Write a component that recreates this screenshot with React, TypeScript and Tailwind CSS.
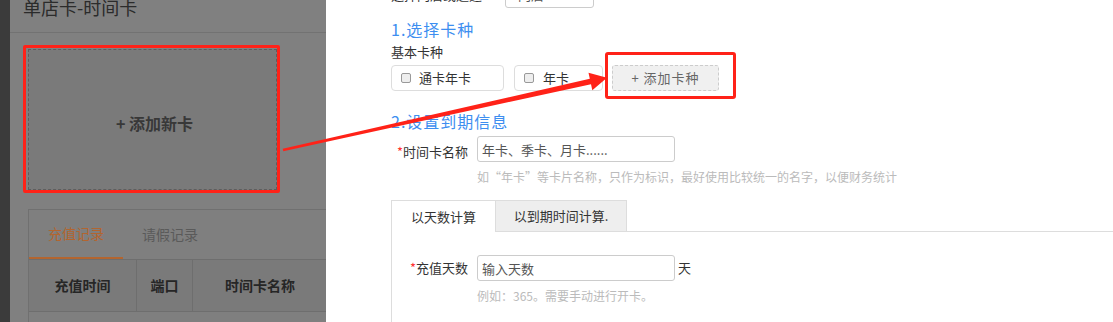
import React from "react";

export default function App() {
  return (
    <div className="relative w-[1113px] h-[322px] overflow-hidden flex bg-white font-['Noto_Sans_CJK_SC','Microsoft_YaHei','Liberation_Sans',sans-serif]">
      {/* left dimmed page */}
      <div className="w-[10px] shrink-0 bg-[#3b3b3b]" />
      <div className="w-[316px] shrink-0 bg-[#808080] overflow-hidden">
        <div className="flex h-[33px] border-b border-[#727272] pl-[13px]">
          <div className="-mt-[5px] text-[18px] leading-[24px] text-[#2b2b2b]">单店卡-时间卡</div>
        </div>
        <div className="ml-[18px] mt-[16px] w-[249px] h-[141px] border border-dashed border-[#5e5e5e] bg-[#7a7a7a] flex items-center justify-center pt-[7px] pl-[4px] text-[16px] leading-[22px] font-bold text-[#383838]">
          + 添加新卡
        </div>
        <div className="ml-[18px] mt-[19px] w-[330px] border border-[#707070] bg-[#7f7f7f]">
          <div className="flex h-[50px] border-b border-[#6e6e6e]">
            <div className="w-[94px] flex items-center justify-center text-[14px] text-[#b3652f] border-b-2 border-[#b3652f]">充值记录</div>
            <div className="w-[94px] flex items-center justify-center text-[14px] text-[#5a5a5a]">请假记录</div>
          </div>
          <div className="flex h-[52px] bg-[#7a7a7a] border-b border-[#6e6e6e] text-[14px] font-bold text-[#262626]">
            <div className="w-[108px] border-r border-[#6e6e6e] flex items-center justify-center">充值时间</div>
            <div className="w-[56px] border-r border-[#6e6e6e] flex items-center justify-center">端口</div>
            <div className="w-[134px] flex items-center justify-center">时间卡名称</div>
          </div>
          <div className="h-[40px]" />
        </div>
      </div>

      {/* modal */}
      <div className="flex-1 bg-white pl-[65px] text-[13px] text-[#333]">
        <div className="flex items-center h-[26px] -mt-[18px]">
          <div className="w-[114px] leading-[18px]">选择门店或通道</div>
          <div className="w-[89px] h-[26px] border border-[#ccc] rounded-[3px] pl-[12px] flex items-center text-[#555]">门店</div>
        </div>
        <div className="mt-[10px] text-[16px] leading-[22px] text-[#3d8ef0] tracking-[1px]">1.选择卡种</div>
        <div className="mt-[3px] leading-[18px]">基本卡种</div>
        <div className="mt-[4px] flex">
          <div className="w-[113px] h-[26px] border border-[#ddd] rounded-[4px] flex items-center pl-[9px]">
            <span className="w-[10px] h-[10px] border border-[#999] rounded-[2px] bg-[#eee] mr-[8px]" />
            <span className="leading-[18px]">通卡年卡</span>
          </div>
          <div className="ml-[10px] w-[89px] h-[26px] border border-[#ddd] rounded-[4px] flex items-center pl-[9px]">
            <span className="w-[10px] h-[10px] border border-[#999] rounded-[2px] bg-[#eee] mr-[9px]" />
            <span className="leading-[18px]">年卡</span>
          </div>
          <div className="ml-[9px] w-[107px] h-[26px] border border-dashed border-[#ccc] rounded-[3px] bg-[#f0f0f0] flex items-center justify-center text-[#666] tracking-[1px]">
            + 添加卡种
          </div>
        </div>
        <div className="mt-[19px] text-[16px] leading-[22px] text-[#3d8ef0] tracking-[1px]">2.设置到期信息</div>
        <div className="mt-[4px] flex items-center">
          <div className="w-[77px] text-right mr-[9px] pt-[5px] leading-[18px]">
            <span className="text-[#f33]">*</span>时间卡名称
          </div>
          <input
            readOnly
            placeholder="年卡、季卡、月卡......"
            className="w-[198px] h-[26px] border border-[#ccc] rounded-[3px] px-[4px] text-[13px] outline-none placeholder:text-[#555]"
          />
        </div>
        <div className="mt-[7px] ml-[86px] text-[12px] leading-[16px] text-[#bbb] whitespace-nowrap">
          如“年卡”等卡片名称，只作为标识，最好使用比较统一的名字，以便财务统计
        </div>
        <div className="mt-[15px] flex h-[32px]">
          <div className="w-[104px] border-l border-t border-[#ddd] bg-white flex items-center justify-center">以天数计算</div>
          <div className="w-[132px] bg-[#eee] border border-[#ddd] flex items-center justify-center">以到期时间计算.</div>
          <div className="flex-1 border-b border-[#ddd]" />
        </div>
        <div className="border-l border-[#ddd] pt-[23px] h-[120px]">
          <div className="flex items-center">
            <div className="w-[76px] text-right mr-[9px] leading-[18px]">
              <span className="text-[#f33]">*</span>充值天数
            </div>
            <input
              readOnly
              placeholder="输入天数"
              className="w-[198px] h-[26px] border border-[#ccc] rounded-[3px] px-[4px] text-[13px] outline-none placeholder:text-[#555]"
            />
            <span className="ml-[3px]">天</span>
          </div>
          <div className="mt-[7px] ml-[85px] text-[12px] leading-[16px] text-[#bbb]">例如：365。需要手动进行开卡。</div>
        </div>
      </div>

      {/* annotations */}
      <div className="absolute left-[23px] top-[45px] w-[257px] h-[148px] border-[3px] border-[#ff2218] rounded-[2px]" />
      <div className="absolute left-[605px] top-[52px] w-[131px] h-[47px] border-[3px] border-[#ff2218] rounded-[3px]" />
      <svg className="absolute left-0 top-0" width="1113" height="322" viewBox="0 0 1113 322">
        <polygon
          points="283.3,151.3 282.7,148.8 589.8,78.8 588.5,72.7 607,77.8 592.3,90.3 591,84.2"
          fill="#ff2218"
        />
      </svg>
    </div>
  );
}
